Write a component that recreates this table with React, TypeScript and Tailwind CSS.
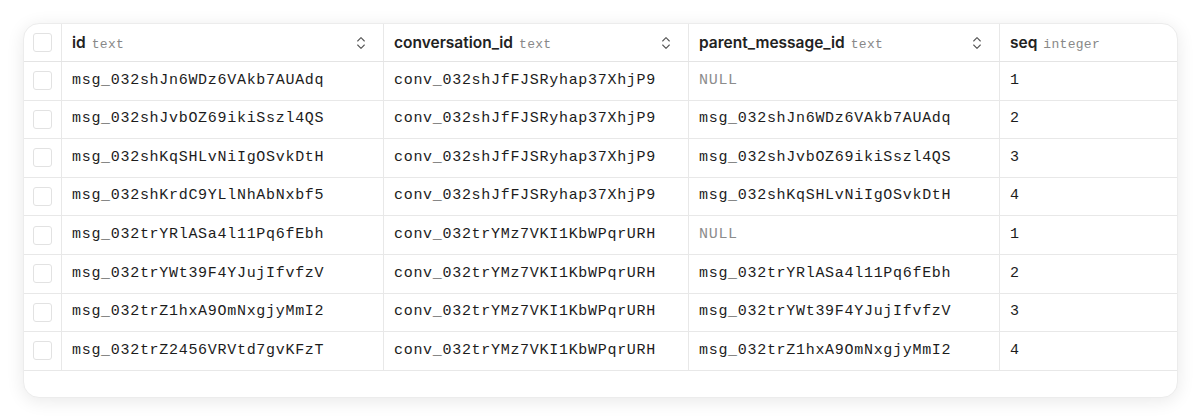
import { ChevronsUpDown } from "lucide-react";

const mono = "font-['Liberation_Mono','DejaVu_Sans_Mono',monospace]";

const columns = [
  { name: "id", type: "text", width: "w-[322px]", sort: true },
  { name: "conversation_id", type: "text", width: "w-[305px]", sort: true },
  { name: "parent_message_id", type: "text", width: "w-[311px]", sort: true },
  { name: "seq", type: "integer", width: "flex-1", sort: false },
];

const rows: [string, string, string | null, number][] = [
  ["msg_032shJn6WDz6VAkb7AUAdq", "conv_032shJfFJSRyhap37XhjP9", null, 1],
  ["msg_032shJvbOZ69ikiSszl4QS", "conv_032shJfFJSRyhap37XhjP9", "msg_032shJn6WDz6VAkb7AUAdq", 2],
  ["msg_032shKqSHLvNiIgOSvkDtH", "conv_032shJfFJSRyhap37XhjP9", "msg_032shJvbOZ69ikiSszl4QS", 3],
  ["msg_032shKrdC9YLlNhAbNxbf5", "conv_032shJfFJSRyhap37XhjP9", "msg_032shKqSHLvNiIgOSvkDtH", 4],
  ["msg_032trYRlASa4l11Pq6fEbh", "conv_032trYMz7VKI1KbWPqrURH", null, 1],
  ["msg_032trYWt39F4YJujIfvfzV", "conv_032trYMz7VKI1KbWPqrURH", "msg_032trYRlASa4l11Pq6fEbh", 2],
  ["msg_032trZ1hxA9OmNxgjyMmI2", "conv_032trYMz7VKI1KbWPqrURH", "msg_032trYWt39F4YJujIfvfzV", 3],
  ["msg_032trZ2456VRVtd7gvKFzT", "conv_032trYMz7VKI1KbWPqrURH", "msg_032trZ1hxA9OmNxgjyMmI2", 4],
];

const widths = ["w-[322px]", "w-[305px]", "w-[311px]", "flex-1"];

const Checkbox = () => (
  <div className="w-[19px] h-[19px] rounded-[3px] border border-[#e2e2e2] bg-white" />
);

const CheckCell = () => (
  <div className="w-[38px] shrink-0 flex items-center justify-center border-r border-[#e8e8e8]">
    <Checkbox />
  </div>
);

export default function App() {
  return (
    <div className="w-[1200px] h-[420px] bg-white p-[23px] pb-[22px] pr-[22px] font-['Inter','Noto_Sans',sans-serif]">
      <div className="h-full rounded-[16px] border border-[#ececec] bg-white shadow-[0_3px_18px_rgba(0,0,0,0.09)] overflow-hidden flex flex-col">
        <div className="flex h-[38px] border-b border-[#e4e4e4] shrink-0">
          <CheckCell />
          {columns.map((c, i) => (
            <div
              key={c.name}
              className={`${c.width} shrink-0 flex items-center pl-[10px] pr-[14px] ${i < 3 ? "border-r border-[#e8e8e8]" : ""}`}
            >
              <span className="flex items-baseline">
                <span className="text-[15.5px] font-semibold text-[#222]">{c.name}</span>
                <span className={`${mono} ml-[6px] text-[13px] text-[#888] tracking-[0.3px]`}>
                  {c.type}
                </span>
              </span>
              {c.sort && (
                <ChevronsUpDown className="ml-auto text-[#555]" size={16} strokeWidth={1.6} />
              )}
            </div>
          ))}
        </div>
        {rows.map((r, ri) => (
          <div key={ri} className="flex h-[38.6px] border-b border-[#e8e8e8] shrink-0">
            <CheckCell />
            {r.map((v, i) => (
              <div
                key={i}
                className={`${widths[i]} shrink-0 flex items-center pl-[10px] ${mono} text-[15px] tracking-[0.7px] ${i < 3 ? "border-r border-[#e8e8e8]" : ""} ${v === null ? "text-[#8c8c8c]" : "text-[#1c1c1c]"}`}
              >
                {v === null ? "NULL" : v}
              </div>
            ))}
          </div>
        ))}
        <div className="flex-1" />
      </div>
    </div>
  );
}
